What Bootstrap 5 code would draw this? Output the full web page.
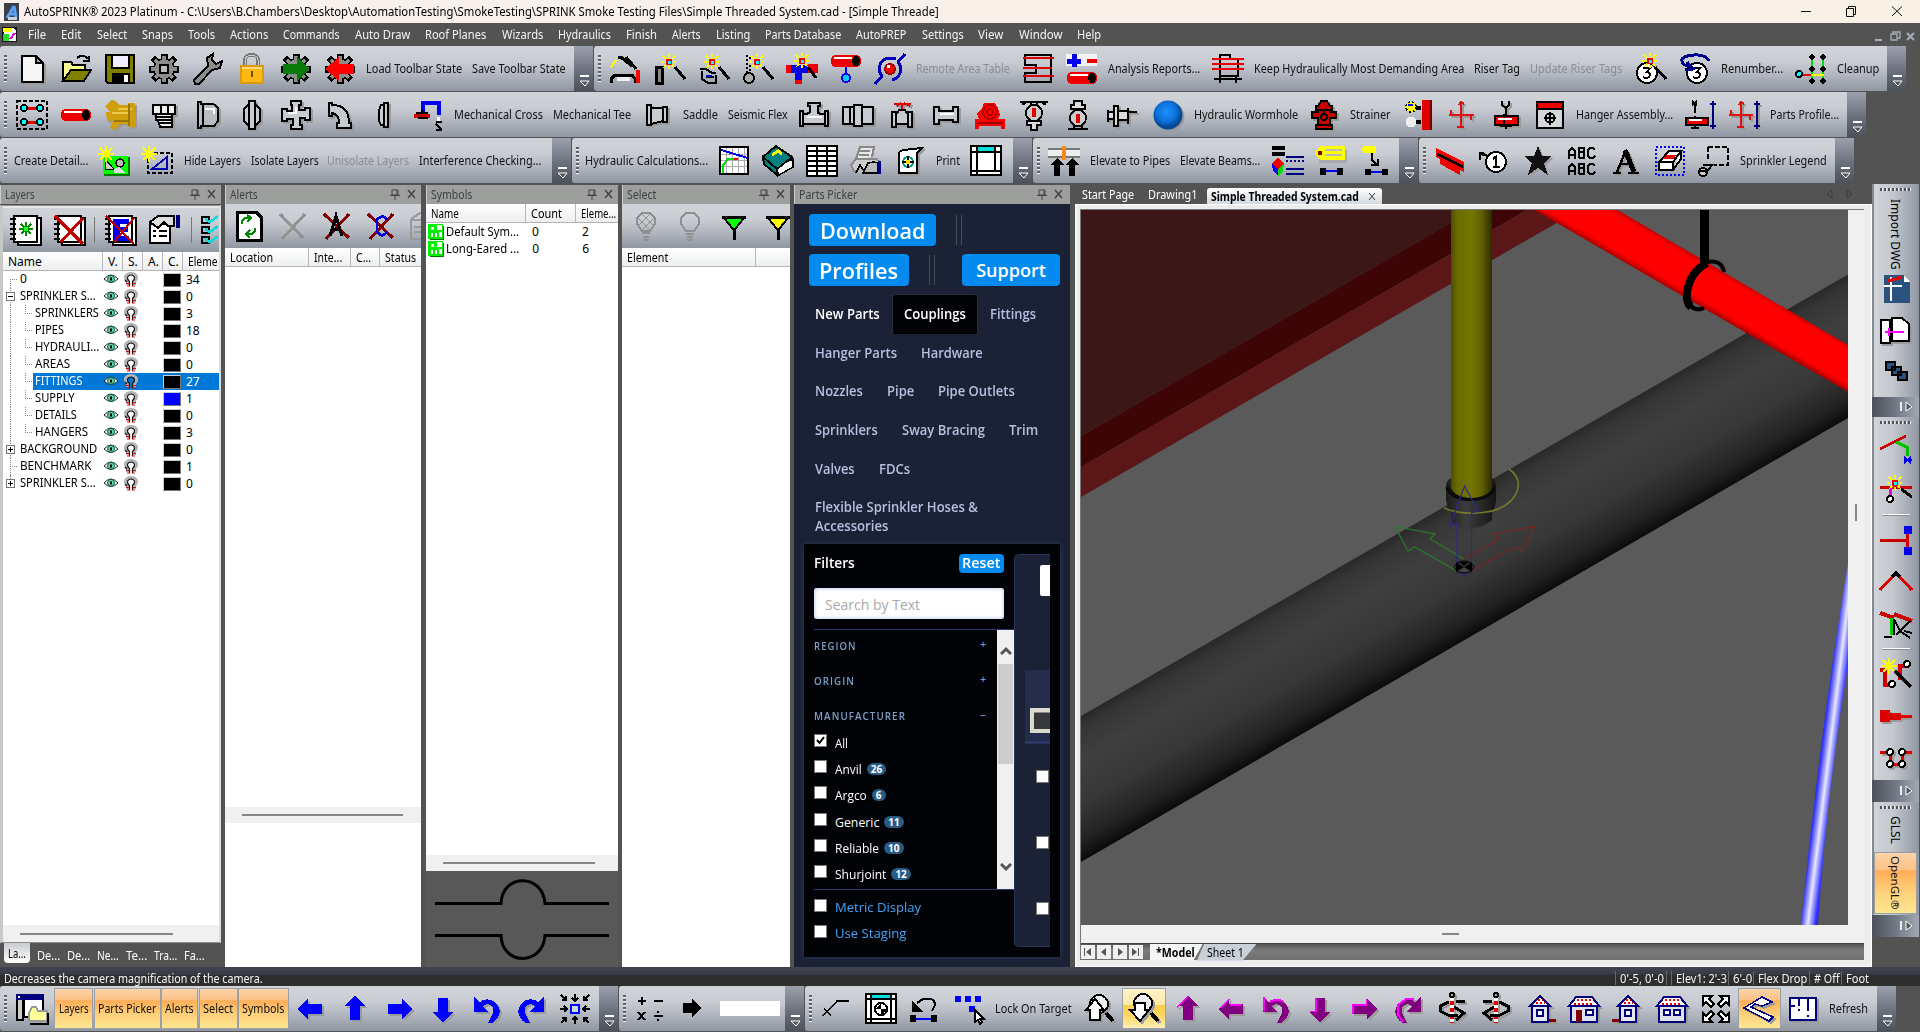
<!DOCTYPE html>
<html lang="en">
<head>
<meta charset="utf-8">
<title>AutoSPRINK 2023 Platinum</title>
<link href="https://cdn.jsdelivr.net/npm/bootstrap@5.3.0/dist/css/bootstrap.min.css" rel="stylesheet">
<style>
html,body{width:1920px;height:1032px;overflow:hidden}
body{font:12px/15px "Noto Sans","Open Sans",sans-serif;background:#535353;color:#000;margin:0}
.t{display:inline-block;white-space:nowrap;transform-origin:0 50%}
svg{display:block;flex:none}
.titlebar{height:23px;background:linear-gradient(90deg,#f9efed,#f9f1e6);padding:0 14px 0 4px}
.menubar{height:23px;color:#f4f4f4;padding-left:2px;gap:15px}
.bars{height:46px;gap:1px}
.tb{height:45px;flex:none;color:#111;background:linear-gradient(#d0d3d8 0,#c9ccd2 35%,#b0b5be 65%,#9097a2 100%);border-radius:3px 0 0 3px;overflow:hidden}
.tb .t{margin-left:4px}
.grip{width:3px;height:28px;margin:0 3px 0 4px;background:repeating-linear-gradient(#5b6068 0 2px,#eef0f3 2px 3px,transparent 3px 4px);flex:none}
.ib{width:44px;height:40px;display:flex;align-items:center;justify-content:center;flex:none}
.ic{width:32px;height:32px;fill:none;stroke:#000;stroke-width:2;overflow:visible;shape-rendering:crispEdges}
.sh{filter:drop-shadow(2px 2px 0 #9b9b9b)}
.n{stroke:none}
.gp{width:6px;flex:none}
.g4{width:4px;flex:none}
.more{width:19px;height:45px;margin-left:auto;flex:none;background:linear-gradient(#9ba1ac,#6a717d 55%,#4c515a);display:flex;align-items:flex-end;justify-content:center;padding-bottom:3px}
.off{color:#8b8e93}
.hot{height:41px;background:linear-gradient(#fbd3ab 0,#fcc183 28%,#ffae57 30%,#fed07b 65%,#ffe78f 100%);border:1px solid #9aa0aa;display:flex;align-items:center;justify-content:center;flex:none;color:#111}
.hot .t{margin-left:0}
.hoty{background:linear-gradient(#fdf3c8 0,#fde9a8 40%,#ffcf4b 42%,#ffd768 70%,#fdf0b8 100%)}
.middle{height:783px}
.pane{flex:none;height:782px;margin-top:1px}
.phead{height:19px;background:#9d9f9c;color:#3e4146;padding:0 4px 0 4px;border-left:1px solid #c9ccd0;flex:none}
.ptool{flex:none;height:44px;background:linear-gradient(#d0d3d8 0,#c9ccd2 35%,#b0b5be 65%,#9097a2 100%);overflow:hidden}
.colhead{height:19px;flex:none;background:linear-gradient(#fff,#eceef0);border-bottom:1px solid #b4b4b4;overflow:hidden}
.colhead>div{border-right:1px solid #b9b9b9;padding-left:5px;height:19px;display:flex;align-items:center;overflow:hidden;flex:none}
.colhead>div:last-child{border-right:0}
.strip{height:16px;flex:none;background:#f0f0f0;display:flex;align-items:center}
.strip i{display:block;height:2px;background:#868686}
.lrow{height:17px;display:grid;grid-template-columns:99px 20px 20px 20px 20px 1fr;align-items:center;position:relative}
.lrow .nm{position:relative;height:17px;padding-left:17px;white-space:nowrap}
.lrow .nm.kid{padding-left:32px}
.lrow .nm::before{content:"";position:absolute;left:7px;top:0;height:17px;width:7px;border-left:1px dotted #888}
.lrow .nm.tip::after{content:"";position:absolute;left:7px;top:8px;width:7px;border-top:1px dotted #888}
.lrow .nm.top0::before{top:8px;height:9px}
.lrow .nm.end0::before{height:8px}
.lrow .nm.kid::after{content:"";position:absolute;left:22px;top:0;width:7px;height:9px;border-left:1px dotted #888;border-bottom:1px dotted #888}
.lrow .nm.more0::after{height:17px;border-bottom:0}
.box9{position:absolute;left:3px;top:4px;width:9px;height:9px;border:1px solid #777;background:#fff;z-index:1}
.box9::before{content:"";position:absolute;left:1px;top:3px;width:5px;height:1px;background:#000}
.box9.pl::after{content:"";position:absolute;left:3px;top:1px;width:1px;height:5px;background:#000}
.sw{width:18px;height:14px;background:#000;border:1px solid #777;border-top-color:#ccc;border-left-color:#ccc;margin-left:1px}
.seld{color:#fff}
.seld::before{content:"";position:absolute;left:30px;right:0;top:0;height:17px;background:#0078d7}
.seld>*{position:relative}
.ltabs{height:24px;color:#fff;gap:7px;padding-left:4px}
.ltabs .acttab{background:linear-gradient(#c9ccd0,#fff);color:#000;width:26px;height:20px;border-radius:0 0 4px 4px;display:flex;align-items:center;padding-left:4px;margin-top:-4px}
.picker{background:#1b2236;font-family:"Open Sans",sans-serif;height:763px;color:#b4c0de;overflow:hidden}
.pk{background:#058bf0;color:#fff;border:0;border-radius:4px;height:32px;line-height:1;padding:0;font-weight:600;display:flex;align-items:center;justify-content:center}
.vv{width:6px;height:30px;border-left:1px solid #414b5b;border-right:1px solid #414b5b}
.pnav{font-weight:600;font-size:13.5px;line-height:19px}
.pnav .prow{height:38.7px;display:flex;align-items:center;padding-left:9px}
.pnav .lk{padding:0 12px;display:flex;align-items:center;height:40px}
.lk.cur{background:#020306;color:#fff;border:1px solid #262d3c;border-bottom:0;border-radius:4px 4px 0 0;padding:0 11px!important}
.filt{background:#020306;width:256px;height:413px;margin-left:10px;box-shadow:0 0 5px #2c3a57}
.ck{width:13px;height:13px;background:#fff;border:1px solid #777;flex:none}
.sec{font-size:10px;letter-spacing:1.1px;color:#7f9fc6;font-weight:600;height:35px;display:flex;justify-content:space-between;padding-right:10px}
.pill{background:#285b85;color:#fff;border-radius:7px;font-size:10px;font-weight:700;line-height:12px;height:12px;padding:0 4px;margin-left:5px;margin-top:3px}
.crow{height:26.2px;display:flex;align-items:flex-start;font-size:12.3px;color:#fff}
.crow .t{margin-left:8px;margin-top:2px}
.view{width:797px;flex:none;margin-left:5px;height:783px}
.vtabs{height:20px;color:#fff;padding-left:7px}
.vtabs .on{background:linear-gradient(#fff,#d3d9e0);color:#000;height:16px;margin-top:4px;border-radius:3px 3px 0 0;padding:0 5px 0 4px;font-weight:700;display:flex;align-items:center}
.frame{height:763px;background:#ececec;border:1px solid #fff;border-left:2px solid #f4f4f4;padding:4px 7px 8px 3px}
.nb{width:14px;height:14px;background:#f0f0f0;display:flex;align-items:center;justify-content:center}
.side{width:47px;margin-left:0;height:753px}
.vb{background:linear-gradient(90deg,#d0d3d8,#c5c9cf 40%,#9097a2);display:flex;flex-direction:column;align-items:center;overflow:hidden;border-left:2px solid #82898f;padding-right:2px;flex:none}
.vgrip{width:32px;height:3px;margin:4px 0 0;background:repeating-linear-gradient(90deg,#4d5158 0 2px,#eef0f3 2px 3px,transparent 3px 4px);flex:none}
.vmore{flex:none;width:47px;background:linear-gradient(90deg,#4c515a,#717885 50%,#a3a9b3);display:flex;align-items:center;justify-content:flex-end;padding-right:4px}
.vt{writing-mode:vertical-rl;text-orientation:sideways;white-space:nowrap}
.vi{height:42px;display:flex;align-items:center;justify-content:center;flex:none}
.vsep{width:28px;height:2px;border-top:1px solid #fff;background:#8a8f98;flex:none}
.statusbar{height:19px;background:linear-gradient(#3f4450 0,#343943 42%,#2d2d2d 43%,#2f2f2e 100%);color:#f4f4f4;padding-left:4px}
.sc{border-left:1px solid #6a6a6a;height:14px;padding-left:4px;display:flex;align-items:center;flex:none}
</style>
<script src="https://cdn.jsdelivr.net/npm/bootstrap@5.3.0/dist/js/bootstrap.bundle.min.js"></script>
</head>
<body class="d-flex flex-column">
<svg width="0" height="0" style="position:absolute">
<defs>
<g id="spk" stroke-width="2"><path stroke="#ff0" d="M0-8V8M-8 0H8M-6-6L6 6M6-6L-6 6" stroke-dasharray="3 1"/><rect x="-3" y="-3" width="6" height="6" fill="#e00" stroke="none"/><rect x="-1" y="-1" width="3" height="3" fill="#0ff" stroke="none"/></g>
<g id="star"><path stroke="#ff0" d="M0-8V8M-8 0H8M-6-6L6 6M6-6L-6 6"/></g>
<g id="arr"><path stroke="none" d="M0 16L13 3V10H29V22H13V29Z"/></g>
<g id="undo"><path d="M3 4V19H17L12 13C17 9 24 12 22 20L17 30H21C29 26 31 17 26 11C21 5 13 5 9 9Z" stroke="none"/></g>
<g id="gear"><path d="M16 1V31M1 16H31M5 5L27 27M27 5L5 27" stroke="#000" stroke-width="7"/><circle cx="16" cy="16" r="11" fill="#000" stroke="none"/><path d="M16 3V29M3 16H29M7 7L25 25M25 7L7 25" stroke="#8c8c8c" stroke-width="4"/><circle cx="16" cy="16" r="9.5" fill="#8c8c8c" stroke="none"/></g>
<g id="cyl"><rect x="1" y="11" width="30" height="12" rx="5" fill="#e00" stroke="none"/><path d="M4 14H22" stroke="#fff"/><ellipse cx="26" cy="17" rx="4" ry="5" fill="#000" stroke="none"/></g>
<g id="mo"><path d="M4 2H13" stroke="#fff" stroke-width="2"/><path d="M4 7H13L9 12Z" fill="#555" stroke="#fff" stroke-width="1"/></g>
<g id="pin"><path d="M2 1H8V6H2ZM0 6.5H10M5 7V11M7 1V6" stroke="#444"/></g>
<g id="xx"><path d="M1 1L8 9M8 1L1 9" stroke="#444" stroke-width="1.5"/></g>
<g id="eye"><path d="M1 6Q8-2 15 6Q8 13 1 6Z" fill="#fff" stroke="#222"/><circle cx="8" cy="5.8" r="3.5" fill="#5fd0a8" stroke="#086040"/><rect x="7" y="4.5" width="2" height="3" fill="#000" stroke="none"/></g>
<g id="mag"><path d="M3.500 13V9.500Q1 7.500 1.500 4.500Q3 1.500 7 1.500T12.500 4.500Q13 7.500 10.500 9.500V13" stroke="#b4b4b4" stroke-width="3"/><path d="M5.500 14V9.500Q3 7.500 3.500 5Q5 3 7 3T10.500 5Q11 7.500 8.500 9.500V14M1 8L3 10" stroke="#111" stroke-width="1.200"/><path d="M2 11.500H5M3 14H6M9 11.500H12M8 14H11" stroke="#e00"/></g>
<g id="house"><path d="M3 13H29V29H3Z" fill="#dfe2ea" stroke="#00007e"/><path d="M1 13L8 4H24L31 13Z" fill="#fff" stroke="#00007e"/><path d="M6 11H26M9 7H24" stroke="#e00" stroke-dasharray="2 2"/></g>
<g id="house2"><path d="M8 13H24V29H8Z" fill="#e6e8ee" stroke="#00007e"/><path d="M6 13L16 3L26 13Z" fill="#fff" stroke="#00007e"/><path d="M12 10H21M14 7H19" stroke="#e00" stroke-dasharray="2 2"/><path d="M13 17H19V23H13Z" fill="#fff" stroke="#00007e"/></g>
<linearGradient id="gy"><stop offset="0" stop-color="#4d4d00"/><stop offset=".15" stop-color="#6a6a00"/><stop offset=".5" stop-color="#757500"/><stop offset=".75" stop-color="#606000"/><stop offset="1" stop-color="#2c2c00"/></linearGradient>
<linearGradient id="gg" gradientUnits="userSpaceOnUse" x1="1509" y1="469" x2="1573" y2="580"><stop offset="0" stop-color="#282828"/><stop offset=".09" stop-color="#353535"/><stop offset=".3" stop-color="#3f3f3f"/><stop offset=".6" stop-color="#373737"/><stop offset=".85" stop-color="#222"/><stop offset="1" stop-color="#080808"/></linearGradient>
<linearGradient id="gr" gradientUnits="userSpaceOnUse" x1="1700" y1="258" x2="1678" y2="296"><stop offset="0" stop-color="#c80000"/><stop offset=".12" stop-color="#f00"/><stop offset=".8" stop-color="#f00"/><stop offset="1" stop-color="#8a0000"/></linearGradient>
<linearGradient id="gb" gradientUnits="userSpaceOnUse" x1="1812" y1="793" x2="1836" y2="796"><stop offset="0" stop-color="#1a1aa0"/><stop offset=".2" stop-color="#3838ff"/><stop offset=".5" stop-color="#e8e8ff"/><stop offset=".8" stop-color="#3838ff"/><stop offset="1" stop-color="#1a1aa0"/></linearGradient>
<linearGradient id="gc"><stop offset="0" stop-color="#1c1c1c"/><stop offset=".4" stop-color="#3d3d3d"/><stop offset="1" stop-color="#141414"/></linearGradient>
<radialGradient id="ball" cx=".45" cy=".4"><stop offset="0" stop-color="#1e90ff"/><stop offset=".7" stop-color="#0a6fd6"/><stop offset="1" stop-color="#064a96"/></radialGradient>
</defs></svg>

<header class="titlebar d-flex align-items-center">
<svg width="16" height="18" viewBox="0 0 16 18"><rect width="15" height="18" fill="#3c3f4a"/><path d="M10 3L3 15M10 3L12 14M5 11H12" stroke="#58a0f0" stroke-width="3" fill="none"/><path d="M4 14H13V17H4Z" fill="#c9d2e4"/></svg>
<span class="t ms-1" data-w="915">AutoSPRINK® 2023 Platinum - C:\Users\B.Chambers\Desktop\AutomationTesting\SmokeTesting\SPRINK Smoke Testing Files\Simple Threaded System.cad - [Simple Threade]</span>
<svg class="ms-auto" width="106" height="22" fill="none" stroke="#111"><path d="M1 10.500H11"/><path d="M46.500 7.500H53.500V15.500H46.500ZM48.500 7V5.500H55.500V13.500H54"/><path d="M92 5.500L102 15M102 5.500L92 15"/></svg>
</header>

<nav class="menubar d-flex align-items-center">
<svg width="16" height="16" viewBox="0 0 16 16" class="ic" style="width:16px;height:16px;margin-right:-5px"><rect class="n" width="15" height="15" fill="#111"/><path class="n" fill="#fff" d="M2 1H11L14 4V14H2Z"/><path class="n" fill="#ff0" d="M1 1H10V5H1Z"/><path class="n" fill="#2d2" d="M1 7H7V14H1Z"/><path d="M8 12L13 6" stroke="#d0d"/></svg>
<span class="t" data-w="18">File</span><span class="t" data-w="20">Edit</span><span class="t" data-w="30">Select</span><span class="t" data-w="31">Snaps</span><span class="t" data-w="27">Tools</span><span class="t" data-w="38">Actions</span><span class="t" data-w="57">Commands</span><span class="t" data-w="55">Auto Draw</span><span class="t" data-w="61">Roof Planes</span><span class="t" data-w="41">Wizards</span><span class="t" data-w="53">Hydraulics</span><span class="t" data-w="31">Finish</span><span class="t" data-w="29">Alerts</span><span class="t" data-w="34">Listing</span><span class="t" data-w="76">Parts Database</span><span class="t" data-w="50">AutoPREP</span><span class="t" data-w="42">Settings</span><span class="t" data-w="25">View</span><span class="t" data-w="44">Window</span><span class="t" data-w="24">Help</span>
<svg class="ms-auto me-1" width="42" height="20" fill="none" stroke="#a5adba" stroke-width="2"><path d="M1 15H8"/><path d="M17 9H23V15H17ZM19 9V7H26V13H23" stroke-width="1.300"/><path d="M33 8L40 15M40 8L33 15"/></svg>
</nav>

<!-- main toolbars, first row -->
<div class="bars d-flex">
<div class="tb d-flex align-items-center" style="width:593px"><i class="grip"></i>
<div class="ib"><svg class="ic sh"><path fill="#f6f6f6" d="M6 3H20L27 10V29H6ZM20 3V10H27"/></svg></div>
<div class="ib"><svg class="ic"><path fill="#ffff90" d="M3 28V9H11L13 12H25V16"/><path fill="#808000" d="M3 28L11 17H31L24 28Z"/><path d="M17 5Q23 0 28 6M29 3V8H23"/></svg></div>
<div class="ib"><svg class="ic"><path fill="#808000" d="M2 2H30V30H4L2 28Z"/><path fill="#eef" d="M8 2H25V15H8Z"/><path class="n" fill="#000" d="M8 20H26V30H8Z"/><path class="n" fill="#fff" d="M20 22H24V29H20Z"/></svg></div>
<div class="ib"><svg class="ic"><use href="#gear"/><path fill="#bbb" d="M12 12H20V20H12Z"/></svg></div>
<div class="ib"><svg class="ic"><path fill="#8c8c8c" d="M2 27L16 13L15 5L21 1L20 7L24 11L30 8L28 15L20 17L7 31H3Z"/></svg></div>
<div class="ib"><svg class="ic"><path d="M9 14V7C9 0 22 0 22 7V14" stroke="#777" stroke-width="4"/><path d="M9 14V7C9 1 22 1 22 7V14" stroke="#ccc" stroke-width="1"/><rect x="5" y="13" width="22" height="17" fill="#fdb813" stroke="#d99a10"/><path stroke="#6b4a00" d="M16 18V24"/><path stroke="#ffd97a" d="M6 15H26"/></svg></div>
<div class="ib"><svg class="ic"><use href="#gear"/><path class="n" fill="#087a08" d="M3 11H17V4L30 16L17 28V21H3Z"/></svg></div>
<div class="ib"><svg class="ic"><use href="#gear"/><path class="n" fill="#f00" d="M30 11H15V4L1 16L15 28V21H30Z"/></svg></div>
<span class="t" data-w="96">Load Toolbar State</span><i class="gp"></i><span class="t" data-w="94">Save Toolbar State</span>
<div class="more"><svg width="16" height="14"><use href="#mo"/></svg></div></div>

<div class="tb d-flex align-items-center" style="width:1312px"><i class="grip"></i>
<div class="ib"><svg class="ic"><path stroke="#ff0" d="M1 14L6 7"/><path stroke-width="3" d="M8 4H13M12 5L22 13M16 4L26 16M1 30V26L5 22H22L25 26V30"/><path class="n" fill="#eee" d="M7 24H20V28H7Z"/><path fill="#f00" class="n" d="M26 17H30V30H26Z"/></svg></div>
<div class="ib"><svg class="ic"><path fill="#888" stroke-width="3" d="M2 14H8V30H2Z"/><use href="#spk" x="15" y="9"/><path stroke-width="3" d="M21 14L31 26"/></svg></div>
<div class="ib"><svg class="ic"><path d="M2 16H8L14 20H18M4 18V26L10 30H18V22M8 24H16"/><path stroke="#00c" d="M8 23H14"/><use href="#spk" x="14" y="9"/><path stroke-width="3" d="M21 14L31 26"/></svg></div>
<div class="ib"><svg class="ic"><path d="M5 2V20M8 4V20" stroke-dasharray="2 2"/><circle cx="7" cy="25" r="5" fill="#aaa"/><use href="#spk" x="15" y="9"/><path stroke-width="3" d="M21 14L31 26"/></svg></div>
<div class="ib"><svg class="ic"><path class="n" fill="#e00" d="M0 12H6V20H0ZM22 11H32V20H22ZM9 27H16V31H9Z"/><path class="n" fill="#00e" d="M5 12H22V20H16V27H9V20H5Z"/><use href="#spk" x="16" y="8"/><path stroke-width="3" d="M22 14L30 25"/></svg></div>
<div class="ib"><svg class="ic"><use href="#cyl" y="-9"/><path stroke="#00e" d="M16 14V20"/><circle cx="16" cy="25" r="4" fill="#0cf" stroke="#00e"/></svg></div>
<div class="ib"><svg class="ic"><path stroke="#0000b8" stroke-width="3" d="M1 31L8 23M24 9L31 1M24 9A11 11 0 0 1 18 27M8 23A11 11 0 0 1 14 5H22"/><circle cx="16" cy="16" r="5" fill="#f00" stroke="#900"/><rect class="n" x="13" y="12" width="3" height="3" fill="#fff"/></svg></div>
<span class="t off" data-w="94">Remote Area Table</span><i class="gp"></i>
<div class="ib"><svg class="ic"><path d="M3 2H29V29H3V20H14V12H3Z"/><path stroke="#d00" d="M1 5H32M1 15H30M1 23H32" stroke-width="2"/></svg></div>
<div class="ib"><svg class="ic"><path class="n" fill="#fff" d="M0 1H31V13H0Z" opacity=".75"/><path stroke="#00e" stroke-width="5" d="M8 1V14M1 8H15"/><path stroke="#e00" stroke-width="4" d="M21 8H31"/><use href="#cyl" y="8"/></svg></div>
<span class="t" data-w="92">Analysis Reports...</span><i class="gp"></i>
<div class="ib"><svg class="ic"><path d="M8 2H18V6H26V23H8ZM2 26H30M8 22V30M24 22V30"/><path stroke="#e00" d="M0 6H32M0 11H32M0 16H32"/></svg></div>
<span class="t" data-w="210">Keep Hydraulically Most Demanding Area</span><i class="gp"></i><span class="t" data-w="46">Riser Tag</span><i class="gp"></i><span class="t off" data-w="92">Update Riser Tags</span><i class="gp"></i>
<div class="ib"><svg class="ic"><circle cx="12" cy="20" r="10" fill="#fff"/><path d="M8 15H15L12 19Q17 20 14 24Q11 26 8 24"/><use href="#spk" x="15" y="8"/><path stroke-width="3" d="M20 14L31 26"/></svg></div>
<div class="ib"><svg class="ic"><circle cx="18" cy="20" r="10" fill="#fff"/><path d="M14 15H21L18 19Q23 20 20 24Q17 26 14 24"/><path stroke="#00008b" stroke-width="3" d="M30 8Q26 1 15 2Q2 3 3 8Q3 13 12 13M8 9L14 16L6 17"/></svg></div>
<span class="t" data-w="62">Renumber...</span><i class="gp"></i>
<div class="ib"><svg class="ic"><path stroke="#0d0" d="M17 4V28M28 4V28"/><path stroke="#ff0" d="M16 22H29"/><path stroke="#e00" d="M5 22H16"/><path fill="#fff" stroke-width="1.500" d="M15 4L17 2L19 4L17 6ZM26 4L28 2L30 4L28 6ZM15 16L17 14L19 16L17 18ZM26 16L28 14L30 16L28 18ZM15 28L17 26L19 28L17 30ZM26 28L28 26L30 28L28 30Z"/><circle cx="4" cy="21" r="3" fill="#0ff"/></svg></div>
<span class="t" data-w="42">Cleanup</span>
<div class="more"><svg width="16" height="14"><use href="#mo"/></svg></div></div>
</div>

<!-- parts toolbar -->
<div class="bars d-flex">
<div class="tb d-flex align-items-center" style="width:1866px"><i class="grip"></i>
<div class="ib"><svg class="ic"><rect x="1" y="2" width="30" height="28" stroke-dasharray="4 2"/><path stroke="#d00" stroke-width="3" d="M9 9H23M9 23H23"/><g fill="#0ff" stroke-width="1.500"><circle cx="8" cy="9" r="3"/><circle cx="24" cy="9" r="3"/><circle cx="8" cy="23" r="3"/><circle cx="24" cy="23" r="3"/></g></svg></div>
<div class="ib"><svg class="ic"><use href="#cyl" y="-1"/></svg></div>
<div class="ib"><svg class="ic sh"><path class="n" fill="#cf9f10" d="M1 8L7 1L12 2L15 6H24V4H31V28H24V25H16L11 31L6 29L9 22H3L2 13H7Z"/><path stroke="#ecc94a" d="M14 10H28M8 14H24"/><path stroke="#9a7406" d="M25 5V27M10 22H24"/></svg></div>
<div class="ib"><svg class="ic sh"><path fill="#eee" d="M5 6H27V15H5ZM8 15H24V21H8ZM10 21H24V28H12ZM13 6V15M20 6V15M9 18H24M11 24H24"/></svg></div>
<div class="ib"><svg class="ic sh"><path fill="#b8bcc3" d="M6 3H9V5H20Q26 6 26 11V22L22 27H9V29H6Z"/><path stroke="#fff" d="M13 10H22V15"/><path d="M11 5V28"/></svg></div>
<div class="ib"><svg class="ic sh"><path fill="#c8ccd2" d="M13 2H19V30H13ZM13 5L8 10V22L13 27M19 5L24 10V22L19 27"/></svg></div>
<div class="ib"><svg class="ic sh"><path fill="#c8ccd2" d="M11 2H21V6H19V11H25V9H30V21H25V19H20V26H22V30H11V26H13V20H7V22H2V10H7V12H12V6H11Z"/><path stroke="#fff" d="M8 14H16V8"/></svg></div>
<div class="ib"><svg class="ic sh"><path fill="#c8ccd2" d="M5 4H8V6Q25 6 25 24H27V29H13V24H15Q15 15 8 14V17H5Z"/></svg></div>
<div class="ib"><svg class="ic sh"><path fill="#c8ccd2" d="M16 4H20V28H16ZM16 6H13L11 11V22L13 26H16"/></svg></div>
<div class="ib"><svg class="ic"><path stroke="#00e" stroke-width="4" d="M11 14V4H27V16"/><path stroke="#c00" stroke-width="4" d="M2 17H18"/><path d="M4 14H16M6 19H16M10 11V15"/><path stroke="#fff" stroke-width="3" d="M26 18V24"/><path d="M24 23H30M24 25L27 28L30 31M24 31H30"/></svg></div>
<span class="t" data-w="89">Mechanical Cross</span><i class="gp"></i><span class="t" data-w="78">Mechanical Tee</span><i class="g4"></i>
<div class="ib"><svg class="ic sh"><path fill="#c8ccd2" d="M6 6H10V9H22V8H26V23H22V22L10 25V26H6ZM10 6V26M22 9V24"/></svg></div>
<span class="t" data-w="35">Saddle</span><i class="gp"></i><span class="t" data-w="60">Seismic Flex</span><i class="g4"></i>
<div class="ib"><svg class="ic sh"><path fill="#c8ccd2" d="M10 4H22V7H20V14L23 15H27V12H30V27H27V25H5V27H2V12H5V15H9L12 13V7H10ZM5 14V25M27 14V25"/><path stroke="#fff" d="M9 18H24"/></svg></div>
<div class="ib"><svg class="ic sh"><path fill="#c8ccd2" d="M1 8H12V25H1ZM20 8H31V25H20ZM12 6H20V27H12ZM8 8V25"/></svg></div>
<div class="ib"><svg class="ic sh"><path stroke="#d00" d="M8 5H25M11 7L15 4M18 4L24 7M16 4V11"/><path fill="#c8ccd2" d="M6 13H10V16L13 11H19L22 16V13H26V28H22V25H10V28H6ZM10 16V25M22 16V25"/></svg></div>
<div class="ib"><svg class="ic sh"><path fill="#c8ccd2" d="M4 8H9V12H23V8H28V23H23V21H9V25H4Z"/><path stroke="#fff" d="M10 15H24"/></svg></div>
<div class="ib"><svg class="ic"><path class="n" fill="#f00" d="M3 14L8 10L10 4H21L24 9L26 16L24 20H31V30H27V27H5V30H1V20H5Z"/><circle cx="16" cy="13" r="7" stroke="#b00"/><circle cx="16" cy="13" r="3" stroke="#b00"/><path stroke="#900" d="M3 24H29"/></svg></div>
<div class="ib"><svg class="ic"><path d="M2 3H30M4 5Q6 6 8 3M28 5Q26 6 24 3" stroke-width="2"/><circle cx="16" cy="14" r="8" fill="#ccc"/><path stroke="#d00" stroke-width="4" d="M16 9V18"/><path fill="#ddd" d="M9 22H23V26H19V31H13V26H9ZM13 3V7M19 3V7"/></svg></div>
<div class="ib"><svg class="ic"><circle cx="16" cy="19" r="8" fill="#ccc"/><path stroke="#d00" stroke-width="4" d="M16 15V24"/><path fill="#ddd" d="M12 2H20V6H23V10H9V6H12ZM6 30H26M12 26V30M20 26V30"/></svg></div>
<div class="ib"><svg class="ic sh"><path fill="#ddd" d="M2 11V23M2 13H8V20H2M8 7H12V27H8ZM12 12H22V21H12M22 9V25M22 13H31" /></svg></div>
<div class="ib" style="margin-left:2px"><svg class="ic sh"><circle class="n" cx="16" cy="16" r="14.500" fill="url(#ball)" shape-rendering="auto"/></svg></div>
<span class="t" data-w="104">Hydraulic Wormhole</span><i class="g4"></i>
<div class="ib"><svg class="ic sh"><path fill="#c80000" d="M10 7L13 2H19L22 7H24V11H22V13H28V19H22V26H24V30H8V26H10V19H4V13H10V11H8V7Z"/><path d="M8 11H24M16 11V16M8 26H24"/><circle cx="16" cy="18" r="3"/></svg></div>
<span class="t" data-w="41">Strainer</span><i class="gp"></i>
<div class="ib"><svg class="ic"><path class="n" fill="#d00" d="M20 1H28V31H20Z"/><path class="n" fill="#700" d="M28 1H30V31H28Z"/><circle cx="9" cy="8" r="5" fill="#ff0" stroke-dasharray="2 2"/><path stroke="#00e" d="M6 6H11"/><circle class="n" cx="9" cy="23" r="5.500" fill="#eee"/><path stroke-width="4" d="M14 9H19M14 23H19"/></svg></div>
<div class="ib"><svg class="ic sh"><path stroke="#e01010" d="M15 3V28M3 16H28M13 6L15 3L18 5M5 11V16M25 16V21M11 28L18 28" stroke-width="2"/></svg></div>
<div class="ib"><svg class="ic sh"><path d="M12 2V6L16 9L19 6V2M16 9V30M10 27H22"/><path class="n" fill="#e00" d="M5 16H29V25H5Z"/><path d="M5 17H28V26H5ZM14 15V28"/><path stroke="#fff" d="M8 20H22"/></svg></div>
<div class="ib"><svg class="ic"><path fill="#d4d6da" d="M3 3H29V29H3Z" stroke-width="2.500"/><path class="n" fill="#e00" d="M4 4H28V9H4Z"/><path d="M3 10H29M16 13V26M10 19H22"/><circle cx="16" cy="19" r="4.500"/></svg></div>
<span class="t" data-w="97">Hanger Assembly...</span><i class="g4"></i>
<div class="ib"><svg class="ic"><path d="M8 2L13 6M13 2L8 6M11 5V14M11 17V30M7 29H15"/><path class="n" fill="#e00" d="M2 18H25V26H2Z"/><path d="M2 19H24V26H2Z"/><path stroke="#fff" d="M5 21H18"/><path stroke="#00007e" d="M29 2V30M26 5H32M26 27H32"/></svg></div>
<div class="ib"><svg class="ic sh"><path stroke="#e01010" stroke-width="2" d="M13 3V28M1 16H25M11 6L13 3L16 5M3 11V16M22 16V21M9 28H16"/><path stroke="#00007e" d="M29 2V30M26 5H32M26 27H32"/></svg></div>
<span class="t" data-w="69">Parts Profile...</span>
<div class="more"><svg width="16" height="14"><use href="#mo"/></svg></div></div>
</div>

<!-- detail, calculation, elevation and annotation toolbars -->
<div class="bars d-flex">
<div class="tb d-flex align-items-center" style="width:571px"><i class="grip"></i>
<span class="t" data-w="74">Create Detail...</span><i class="g4"></i>
<div class="ib"><svg class="ic"><path class="n" fill="#070" d="M6 12H32V31H6Z"/><path class="n" fill="#0f0" d="M5 11H30V29H5Z"/><path d="M7 14L16 24H7Z" fill="#ccc" stroke-width="1"/><circle cx="22" cy="18" r="4" fill="#bbb" stroke-width="1.500"/><path class="n" d="M16 24L21 22L27 28H16Z" fill="#ddd"/><use href="#star" x="8" y="9"/></svg></div>
<div class="ib"><svg class="ic"><rect x="6" y="8" width="24" height="20" stroke-dasharray="4 2"/><path stroke="#0000b0" d="M10 24L25 12V24Z"/><use href="#star" x="7" y="9"/></svg></div>
<span class="t" data-w="57">Hide Layers</span><i class="gp"></i><span class="t" data-w="68">Isolate Layers</span><i class="g4"></i><span class="t off" data-w="82">Unisolate Layers</span><i class="gp"></i><span class="t" data-w="122">Interference Checking...</span>
<div class="more"><svg width="16" height="14"><use href="#mo"/></svg></div></div>

<div class="tb d-flex align-items-center" style="width:460px"><i class="grip"></i>
<span class="t" data-w="123" style="margin-left:3px">Hydraulic Calculations...</span><i class="g4"></i>
<div class="ib"><svg class="ic"><path fill="#fff" d="M2 2H30V29H2Z"/><path stroke="#aaa" stroke-width="1" d="M8 3V28M14 3V28M20 3V28M26 3V28M3 9H29M3 15H29M3 21H29"/><path stroke="#00e" d="M3 5L30 13"/><path stroke="#0d0" d="M5 28V20L10 14H16"/><path stroke="#f00" d="M16 14H20"/></svg></div>
<div class="ib"><svg class="ic"><path fill="#fff" d="M14 22L31 14V22L17 30Z" stroke-width="1.500"/><path fill="#008080" d="M14 1L30 12L15 24L1 12Z"/><path fill="#008080" d="M1 12L15 24V30L2 19Z"/><path stroke="#ff0" stroke-width="3" d="M10 10L16 6L20 9"/></svg></div>
<div class="ib"><svg class="ic"><path fill="#fff" d="M1 1H31V31H1ZM1 6H31M1 11H31M1 16H31M1 21H31M1 26H31M11 1V31M21 1V31"/></svg></div>
<div class="ib"><svg class="ic"><path stroke="#888" fill="#e8e8e8" d="M6 14L10 2H24L22 12M10 6H20M9 10H19"/><path stroke="#888" fill="#ccc" d="M1 20L6 14H26L30 17V26H4Z"/><path d="M6 28L10 20L14 26L18 18L24 17L28 18V28H12" fill="#bbb" stroke-width="1.500"/><path stroke="#00007e" stroke-width="3" d="M29 16V29"/></svg></div>
<div class="ib"><svg class="ic sh"><path fill="#fff" d="M5 28V10Q4 6 10 5L28 3L23 8V28Z"/><circle cx="14" cy="17" r="5" stroke="#00a080"/><path d="M14 11V23M8 17H20"/><rect class="n" x="12" y="15" width="4" height="4" fill="#fd0"/></svg></div>
<span class="t" data-w="24">Print</span><i class="g4"></i>
<div class="ib"><svg class="ic"><path fill="#fff" d="M1 1H31V30H1ZM7 1V30M25 1V26M1 7H31M1 26H31"/><path class="n" fill="#0dd" d="M8 2H24V6H8Z"/></svg></div>
<div class="more"><svg width="16" height="14"><use href="#mo"/></svg></div></div>

<div class="tb d-flex align-items-center" style="width:385px"><i class="grip" style="margin-right:2px"></i>
<div class="ib"><svg class="ic"><path class="n" fill="#eee" d="M0 4H32V12H0Z"/><path stroke="#777" d="M0 4H32M0 12H32"/><path stroke="#f68a1e" stroke-width="4" d="M16 1V15"/><path class="n" fill="#000" d="M2 20L9 13L16 20H12V31H6V20ZM17 20L24 13L31 20H27V31H21V20Z"/></svg></div>
<span class="t" data-w="80">Elevate to Pipes</span><i class="gp"></i><span class="t" data-w="80">Elevate Beams...</span><i class="g4"></i>
<div class="ib"><svg class="ic"><path stroke-width="4" d="M1 3H14M1 9H14"/><path class="n" fill="#e00" d="M1 19L7 12L13 19L7 24Z"/><path class="n" fill="#00f" d="M1 19L7 24V31L2 26Z"/><path class="n" fill="#0d0" d="M13 19L7 24V31L12 26Z"/><path stroke="#00007e" d="M15 12H33M15 24H33M15 29H33"/><path stroke="#00007e" stroke-dasharray="2 2" d="M15 16H33"/></svg></div>
<div class="ib"><svg class="ic"><path class="n" fill="#aaa" d="M4 5H32V18H4Z"/><path class="n" fill="#ff0" d="M1 5L5 1H30V15H5L1 11Z"/><path stroke="#bbb" d="M10 5H27M10 10H27"/><circle cx="5" cy="8" r="1.500" stroke="#800"/><path stroke="#00e" d="M9 26H25"/><path class="n" fill="#000" d="M5 23H11V30H5ZM22 23H28V30H22Z"/></svg></div>
<div class="ib"><svg class="ic"><path class="n" fill="#ff0" d="M2 4L5 1H17V8H5Z"/><path d="M13 8V15L18 20M12 20H19V14"/><path stroke="#00e" d="M9 27H25"/><path class="n" fill="#000" d="M6 24H12V30H6ZM23 24H29V30H23Z"/></svg></div>
<div class="more"><svg width="16" height="14"><use href="#mo"/></svg></div></div>

<div class="tb d-flex align-items-center" style="width:435px"><i class="grip" style="margin-right:2px"></i>
<div class="ib"><svg class="ic"><path class="n" fill="#e00" d="M2 3L30 17V27L2 12Z"/><path d="M3 9L29 22" stroke-width="3"/><path class="n" fill="#e00" d="M6 14L26 24L26 30L6 19Z"/></svg></div>
<div class="ib"><svg class="ic"><circle cx="18" cy="17" r="10" fill="#fff"/><path d="M15 14L18 12V22M15 22H22M9 10L2 9M2 15V8H6" stroke-width="2.500"/></svg></div>
<div class="ib"><svg class="ic sh"><path class="n" fill="#111" d="M16 1L20 11H30L22 18L26 30L16 23L6 30L10 18L2 11H12Z"/></svg></div>
<div class="ib"><svg class="ic"><g id="abc"><path d="M3 14V6L6 3L9 6V14M3 10H9M13 13V3H18V7H13M18 8V13H13M29 5L27 3H24L22 5V11L24 13H27L29 11"/></g><use href="#abc" y="16"/></svg></div>
<div class="ib"><svg class="ic sh"><path d="M7 27L16 5M10 19H21M3 28H11M18 28H29" stroke-width="2.500"/><path d="M15 5L24 27" stroke-width="5"/></svg></div>
<div class="ib"><svg class="ic"><rect x="2" y="2" width="28" height="28" stroke="#00f" stroke-dasharray="2 2"/><path fill="#fff" d="M5 17L15 6H27L19 17ZM5 17V25H19V17M19 25L27 14V6"/><path class="n" fill="#e00" d="M12 10H22L20 14H9Z"/></svg></div>
<div class="ib"><svg class="ic"><path d="M10 2H30V20H16M10 2V14" stroke-dasharray="5 2" stroke-width="2"/><circle cx="5" cy="27" r="4" fill="#ccc"/><path d="M5 20H14L8 28M2 26H9"/></svg></div>
<span class="t" data-w="87">Sprinkler Legend</span>
<div class="more"><svg width="16" height="14"><use href="#mo"/></svg></div></div>
</div>

<!-- docked panes and drawing window -->
<main class="middle d-flex">
<section class="pane d-flex flex-column" style="width:221px">
<div class="phead d-flex align-items-center"><span class="t" data-w="30">Layers</span><svg class="ms-auto" width="27" height="12" fill="none"><use href="#pin"/><use href="#xx" x="17"/></svg></div>
<div class="bg-white d-flex flex-column" style="height:739px;border:1px solid #8a8d92;border-left:3px solid #c8c8c8;border-right:2px solid #dcdcdc;margin-top:1px">
<div class="ptool d-flex align-items-center" style="height:46px;border-top:2px solid #e8e8e8">
<div class="ib"><svg class="ic"><path fill="#fff" stroke-width="2" d="M9 4H32V31H9Z"/><path fill="#fff" d="M5 2H28V28H5Z"/><path stroke-width="2" d="M1 5H7M1 10H7M1 15H7M1 20H7M1 25H7"/><path stroke="#080" d="M17 8V22M10 15H24M12 10L22 20M22 10L12 20"/><rect class="n" x="15" y="13" width="4" height="4" fill="#2f2"/></svg></div>
<div class="ib"><svg class="ic"><path fill="#fff" d="M9 4H32V31H9Z"/><path fill="#fff" d="M5 2H28V28H5Z"/><path d="M1 5H7M1 10H7M1 15H7M1 20H7M1 25H7"/><path stroke="#c00000" stroke-width="3" d="M2 2L30 30M30 4L8 28"/></svg></div>
<i style="width:2px;height:26px;background:#f4f4f4;border-left:1px solid #777;margin:0 3px"></i>
<div class="ib"><svg class="ic"><path fill="#fff" d="M9 4H32V31H9Z"/><path fill="#fff" d="M5 2H28V28H5Z"/><path d="M1 5H7M1 10H7M1 15H7M1 20H7M1 25H7"/><path class="n" fill="#00e" d="M9 5H25V10H16V13H24V18H16V22H25V27H9Z"/><path stroke="#c00000" stroke-width="2" d="M2 2L30 30M30 4L10 28"/></svg></div>
<div class="ib"><svg class="ic"><path fill="#fff" d="M2 10H22V29H2ZM5 17H8M11 17H19M5 22H8M11 22H19"/><path fill="#ddd" d="M2 8L10 2H26V12H20L16 8L10 14Z"/><path stroke="#00007e" stroke-width="4" d="M30 1V14"/></svg></div>
<i style="width:2px;height:26px;background:#f4f4f4;border-left:1px solid #777;margin:0 4px 0 5px"></i>
<svg class="ic" style="margin-left:4px"><path d="M2 3H9V9H2ZM2 13H9V19H2ZM2 23H9V29H2Z"/><path stroke="#0dd" stroke-width="2.500" d="M5 5L10 8L18 2M5 15L10 18L18 12M5 25L10 28L18 22"/></svg>
</div>
<div class="colhead d-flex"><div style="width:100px">Name</div><div style="width:20px">V.</div><div style="width:20px">S.</div><div style="width:20px">A.</div><div style="width:20px">C.</div><div style="width:36px"><span class="t" data-w="30">Eleme</span></div></div>
<div id="layerRows"></div>
<div class="strip mt-auto" style="height:17px"><i style="width:153px;margin-left:17px"></i></div>
</div>
<div class="ltabs d-flex align-items-center"><div class="acttab"><span class="t" data-w="18">La...</span></div><span class="t" data-w="23">De...</span><span class="t" data-w="23">De...</span><span class="t" data-w="22">Ne...</span><span class="t" data-w="21">Te...</span><span class="t" data-w="23">Tra...</span><span class="t" data-w="21">Fa...</span></div>
</section>

<section class="pane d-flex flex-column bg-white" style="width:196px;margin-left:4px">
<div class="phead d-flex align-items-center"><span class="t" data-w="28">Alerts</span><svg class="ms-auto" width="27" height="12" fill="none"><use href="#pin"/><use href="#xx" x="17"/></svg></div>
<div class="ptool d-flex align-items-center" style="padding-left:2px">
<div class="ib"><svg class="ic"><path fill="#fff" stroke-width="3" d="M4 2H23L28 7V30H4Z"/><path stroke="#080" stroke-width="2.500" d="M9 14V11L12 8H17M14 5L18 8L14 12M22 18V21L19 24H14M17 20L13 24L17 28"/></svg></div>
<div class="ib"><svg class="ic"><path stroke="#929292" stroke-width="3" d="M3 4L26 28M28 4L5 29"/></svg></div>
<div class="ib"><svg class="ic"><path stroke="#800000" stroke-width="3" d="M3 4L28 28M28 4L5 29"/><path d="M9 26L15 6L21 26M11 19H19" stroke-width="3"/></svg></div>
<div class="ib"><svg class="ic"><path stroke="#800000" stroke-width="3" d="M3 4L28 28M28 4L5 29"/><path stroke="#00e" stroke-width="2.500" d="M23 10L18 6L12 9V22L17 26L23 22"/></svg></div>
<svg class="ic" style="margin-left:5px"><path stroke="#999" d="M3 10H22V29H3ZM6 17H19M6 22H19M3 9L12 3H26"/></svg>
</div>
<div class="colhead d-flex"><div style="width:84px"><span class="t" data-w="43">Location</span></div><div style="width:42px"><span class="t" data-w="28">Inte...</span></div><div style="width:29px"><span class="t" data-w="15">C...</span></div><div style="width:41px"><span class="t" data-w="31">Status</span></div></div>
<div style="height:540px"></div>
<div class="strip"><i style="width:161px;margin-left:17px"></i></div>
</section>

<section class="pane d-flex flex-column bg-white" style="width:192px;margin-left:5px">
<div class="phead d-flex align-items-center"><span class="t" data-w="41">Symbols</span><svg class="ms-auto" width="27" height="12" fill="none"><use href="#pin"/><use href="#xx" x="17"/></svg></div>
<div class="colhead d-flex"><div style="width:100px"><span class="t" data-w="28">Name</span></div><div style="width:50px"><span class="t" data-w="31">Count</span></div><div style="width:42px"><span class="t" data-w="35">Eleme...</span></div></div>
<div id="symRows"></div>
<div class="strip mt-auto"><i style="width:152px;margin-left:17px"></i></div>
<svg width="192" height="96" viewBox="426 871 192 96" fill="none" stroke="#000" stroke-width="3"><rect x="426" y="871" width="192" height="96" fill="#585858" stroke="none"/><path d="M435 903.500H501C502 873 543 873 545 903.500H609M435 935.500H501C502 966 543 966 545 935.500H609"/></svg>
</section>

<section class="pane d-flex flex-column bg-white" style="width:168px;margin-left:4px">
<div class="phead d-flex align-items-center"><span class="t" data-w="29">Select</span><svg class="ms-auto" width="27" height="12" fill="none"><use href="#pin"/><use href="#xx" x="17"/></svg></div>
<div class="ptool d-flex align-items-center" style="padding-left:2px">
<div class="ib"><svg class="ic"><g stroke="#909090"><path d="M12 21L7 14V8L12 3H20L25 8V14L20 21ZM12 23H20M13 27H19M13 30H19"/><path stroke-width="1" d="M8 8L20 20M12 4L23 15M24 8L12 20M20 4L9 15"/></g></svg></div>
<div class="ib"><svg class="ic"><path stroke="#909090" d="M12 21L7 14V8L12 3H20L25 8V14L20 21ZM12 24H20M13 27H19M13 30H19"/></svg></div>
<div class="ib"><svg class="ic"><path fill="#0f0" d="M6 8H26L17 19H15Z"/><path d="M4 7H28M16 18V30" stroke-width="3"/></svg></div>
<svg class="ic" style="margin-left:6px"><path fill="#ff0" d="M6 8H26L17 19H15Z"/><path d="M4 7H28M16 18V30" stroke-width="3"/></svg>
</div>
<div class="colhead d-flex"><div style="width:134px"><span class="t" data-w="41">Element</span></div><div style="width:34px"></div></div>
</section>

<section class="pane" style="width:276px;margin-left:4px">
<div class="phead d-flex align-items-center"><span class="t" data-w="58">Parts Picker</span><svg class="ms-auto" width="27" height="12" fill="none" style="margin-right:2px"><use href="#pin"/><use href="#xx" x="17"/></svg></div>
<div class="picker">
<div class="d-flex align-items-center" style="padding:10px 0 0 15px"><button class="pk" style="width:127px;font-size:22px"><span class="t" data-w="106">Download</span></button><i class="vv" style="margin-left:20px"></i></div>
<div class="d-flex align-items-center" style="padding:8px 0 0 15px"><button class="pk" style="width:100px;font-size:22px"><span class="t" data-w="79">Profiles</span></button><i class="vv" style="margin-left:20px"></i><button class="pk" style="width:98px;font-size:18px;margin-left:27px"><span class="t" data-w="70">Support</span></button></div>
<div class="pnav" style="padding-top:9px">
<div class="prow"><span class="lk text-white"><span class="t" data-w="65">New Parts</span></span><span class="lk cur"><span class="t" data-w="62">Couplings</span></span><span class="lk"><span class="t" data-w="46">Fittings</span></span></div>
<div class="prow"><span class="lk"><span class="t" data-w="82">Hanger Parts</span></span><span class="lk"><span class="t" data-w="62">Hardware</span></span></div>
<div class="prow"><span class="lk"><span class="t" data-w="48">Nozzles</span></span><span class="lk"><span class="t" data-w="27">Pipe</span></span><span class="lk"><span class="t" data-w="77">Pipe Outlets</span></span></div>
<div class="prow"><span class="lk"><span class="t" data-w="63">Sprinklers</span></span><span class="lk"><span class="t" data-w="83">Sway Bracing</span></span><span class="lk"><span class="t" data-w="29">Trim</span></span></div>
<div class="prow"><span class="lk"><span class="t" data-w="40">Valves</span></span><span class="lk"><span class="t" data-w="31">FDCs</span></span></div>
<div style="padding:10px 0 0 21px;height:55.500px"><span class="t" data-w="163">Flexible Sprinkler Hoses &amp;</span><br><span class="t" data-w="73">Accessories</span></div>
</div>
<div class="filt d-flex">
<div style="width:210px;padding:10px 0 0 10px">
<div class="d-flex text-white" style="font-weight:600;font-size:14px;width:190px"><span class="t" data-w="41" style="padding-top:1px">Filters</span><span class="pk ms-auto" style="width:45px;height:19px"><span class="t" data-w="38">Reset</span></span></div>
<div class="bg-white d-flex align-items-center" style="width:190px;height:31px;margin-top:15px;border-radius:3px;box-shadow:inset 0 0 4px #a9bfe8;color:#a9a9a9;font-size:14px;padding:2px 0 0 11px"><span class="t" data-w="95">Search by Text</span></div>
<div class="d-flex" style="margin-top:10px;width:200px;border-top:1px solid #2a3970;border-bottom:1px solid #2a3970;height:261px">
<div style="width:183px;padding-top:9px">
<div class="sec"><span class="t" data-w="43">REGION</span><span style="margin-top:-2px">+</span></div>
<div class="sec"><span class="t" data-w="41">ORIGIN</span><span style="margin-top:-2px">+</span></div>
<div class="sec" style="height:25px"><span class="t" data-w="92">MANUFACTURER</span><span style="margin-top:-1px">−</span></div>
<div id="makers"></div>
</div>
<div class="d-flex flex-column align-items-center" style="width:17px;background:#f0f0f0;padding-top:16px"><svg width="12" height="9" fill="none" stroke="#555" stroke-width="3"><path d="M1 8L6 3L11 8"/></svg><i style="width:15px;height:100px;background:#cdcdcd;margin-top:9px"></i><svg style="margin-top:99px" width="12" height="9" fill="none" stroke="#555" stroke-width="3"><path d="M1 1L6 6L11 1"/></svg></div>
</div>
<div class="crow" style="margin-top:9px;color:#46a3f5"><i class="ck"></i><span class="t" data-w="86" style="font-size:13.500px;margin-top:1px">Metric Display</span></div>
<div class="crow" style="color:#46a3f5"><i class="ck"></i><span class="t" data-w="71" style="font-size:13.500px;margin-top:1px">Use Staging</span></div>
</div>
<svg width="36" height="393" viewBox="1014 554 36 393" style="margin-top:10px"><rect x="1014.500" y="554.500" width="50" height="392" rx="4" fill="#1b2236" stroke="#26335c"/><rect x="1040" y="565" width="30" height="31" rx="2" fill="#fff"/><path d="M1025 670H1050V741H1025Z" fill="#232c4b"/><path d="M1025 742.500H1050" stroke="#34417a" stroke-width="2"/><path d="M1030 708H1050V733H1030Z" fill="#d9dccd"/><path d="M1034 712.500H1050V729H1034Z" fill="#38393b"/><path d="M1036.500 770.500H1048.500V782.500H1036.500ZM1036.500 836.500H1048.500V848.500H1036.500ZM1036.500 902.500H1048.500V914.500H1036.500Z" fill="#fff" stroke="#777"/></svg>
</div>
</div>
</section>

<section class="view">
<div class="vtabs d-flex align-items-center"><span class="t" data-w="52">Start Page</span><span class="t" data-w="49" style="margin-left:14px">Drawing1</span><div class="on" style="margin-left:9px"><span class="t" data-w="148">Simple Threaded System.cad</span><svg style="margin:1px 0 0 9px" width="9" height="9" fill="none" stroke="#333"><path d="M1 1L7 8M7 1L1 8"/></svg></div>
<svg class="ms-auto me-3" width="30" height="10" fill="none" stroke="#3c3c3c"><path d="M6 1V9L1 5ZM21 1V9L26 5Z"/></svg></div>
<div class="frame">
<div style="border:1px solid #777;border-right:0;border-bottom:0">
<div class="d-flex">
<svg width="767" height="715" viewBox="1081 210 767 715">
<rect x="1081" y="210" width="767" height="715" fill="#5a5a5a"/>
<path d="M1081 210H1473L1081 436Z" fill="#3c1717"/><path d="M1473 210H1527L1081 467V436Z" fill="#3d0505"/><path d="M1527 210H1560V221L1081 497V467Z" fill="#5b1717"/>
<path d="M1848 274.500V418L1081 862V716Z" fill="url(#gg)"/>
<path d="M1534.500 210H1617.600L1848 345V392Z" fill="url(#gr)"/>
<path d="M1700 210H1709V262H1700Z"/>
<path d="M1707 263Q1690 272 1687 292Q1686 303 1691 307" fill="none" stroke="#000" stroke-width="8"/><path d="M1706 262Q1722 259 1724 272M1689 304Q1695 312 1704 308" fill="none" stroke="#000" stroke-width="4"/>
<path d="M1446 485V500Q1447 508 1451 512V523Q1471 536 1492 520V512Q1496 507 1496 500V485Q1495 480 1492 478H1451Q1447 480 1446 485Z" fill="url(#gc)"/>
<path d="M1447 487Q1453 500 1471 499Q1490 499 1495 487" fill="none" stroke="#0c0c0c" stroke-width="4"/>
<path d="M1451 210H1492V488Q1488 497 1471 498Q1455 497 1451 488Z" fill="url(#gy)"/>
<path d="M1509 469Q1523 479 1516 494Q1507 510 1483 512.500Q1461 515 1444 508" fill="none" stroke="#77772a" stroke-width="1.600"/>
<path d="M1464 559L1430 539L1435 534L1395 526.500L1408 551L1414.600 547L1457 571" fill="none" stroke="#2a7a2a" stroke-width="1.200"/>
<path d="M1464 559L1499 539L1493 534L1535 526.500L1521 551L1514 547L1471.500 571" fill="none" stroke="#7a2626" stroke-width="1.200"/>
<path d="M1457 570V523L1450 526L1464.500 486L1478 511L1471.500 513V570Q1464 580 1457 570" fill="none" stroke="#2b2b8c" stroke-width="1.200"/>
<ellipse cx="1464" cy="567" rx="9.500" ry="6" fill="#444" stroke="#000"/><path d="M1464 567L1456 562V572ZM1464 567L1472 562V572ZM1459 562H1469L1464 566Z"/>
<path d="M1848 563Q1818 745 1801 925H1818Q1827 790 1848 666Z" fill="url(#gb)"/>
</svg>
<div class="d-flex align-items-center justify-content-center" style="width:17px;background:#f0f0f0"><i style="width:2px;height:17px;background:#868686;margin-top:-110px"></i></div>
</div>
<div class="strip justify-content-center" style="height:18px"><i style="width:17px;margin-left:-45px"></i></div>
<div class="d-flex align-items-center" style="height:17px;background:linear-gradient(#555,#7b7b7b 40%,#707070);border-top:1px solid #444;gap:2px">
<div class="nb"><svg width="8" height="8"><path d="M0 0H1V8H0ZM7 0V8L2 4Z" fill="#555"/></svg></div><div class="nb"><svg width="8" height="8"><path d="M6 0V8L1 4Z" fill="#555"/></svg></div><div class="nb"><svg width="8" height="8"><path d="M2 0V8L7 4Z" fill="#555"/></svg></div><div class="nb"><svg width="8" height="8"><path d="M6 0H7V8H6ZM0 0V8L5 4Z" fill="#555"/></svg></div>
<div class="d-flex align-items-center" style="height:17px;width:53px;margin-left:5px;background:#f4f6f8;clip-path:polygon(0 0,100% 0,82% 100%,0 100%);padding-left:6px;font-weight:700"><span class="t" data-w="39">*Model</span></div>
<div class="d-flex align-items-center" style="height:17px;width:60px;margin-left:-8px;background:#c9d0d8;clip-path:polygon(12% 0,100% 0,76% 100%,0 100%);padding-left:10px"><span class="t" data-w="37">Sheet 1</span></div>
</div>
</div>
</div>
</section>

<aside class="side ms-0">
<div class="vb" style="height:213px"><i class="vgrip"></i>
<span class="vt" style="height:69px;margin-top:8px"><span id="impDwg" class="vt">Import DWG</span></span>
<div class="vi"><svg class="ic" viewBox="0 0 32 32"><path class="n" fill="#2b527e" d="M4 2H24L30 9V30H4Z"/><path class="n" fill="#fff" d="M24 2V9H30Z"/><path stroke="#fff" d="M4 13H22M11 4V28"/><path stroke="#e00" stroke-width="3" d="M8 8L22 4"/></svg></div>
<div class="vi"><svg class="ic sh"><path fill="#fff" d="M1 5H10V28H1ZM12 3H22L29 9V26H12Z"/><path stroke="#f0f" d="M5 17H24M9 13V21"/></svg></div>
<div class="vi"><svg class="ic"><path fill="#2b527e" d="M6 5H15V13H6ZM12 10H21V18H12ZM18 15H27V23H18Z"/></svg></div></div>
<div class="vmore" style="height:20px"><svg width="16" height="12"><path d="M2 1V10" stroke="#eee" stroke-width="2"/><path d="M7 1V10L13 6Z" fill="#555" stroke="#fff"/></svg></div>
<div class="vb" style="height:363px"><i class="vgrip"></i>
<div class="vi" style="margin-top:3px"><svg class="ic"><path stroke="#c00" stroke-width="3" d="M0 17L26 4"/><path stroke="#0b0" stroke-width="3" d="M16 10L27 15V24"/><path stroke="#00e" stroke-width="2" d="M24 25L31 31M31 25L24 31M24 28H32"/></svg></div>
<div class="vi"><svg class="ic"><path stroke="#c00" stroke-width="3" d="M0 13H32"/><path stroke="#d0d" stroke-width="3" d="M10 14V24"/><circle cx="10" cy="25" r="3" fill="#fff"/><use href="#spk" x="15" y="9"/><path stroke-width="3" d="M21 15L32 23"/></svg></div>
<i class="vsep" style="margin-top:3px"></i>
<div class="vi mt-1"><svg class="ic"><path stroke="#c00" stroke-width="3" d="M0 15H27V4V26"/><path class="n" fill="#00e" d="M24 1H32V9H24ZM24 22H32V30H24Z"/></svg></div>
<div class="vi"><svg class="ic"><path stroke="#d00" stroke-width="3" d="M0 23L16 6L32 23"/><path stroke-width="4" d="M12 10L16 6L20 10"/></svg></div>
<div class="vi"><svg class="ic"><path stroke="#c00" stroke-width="4" d="M14 5L32 12M0 4L14 9"/><path stroke="#0c0" stroke-width="4" d="M12 9V26"/><path d="M14 26V10L20 22L30 29M30 12L16 26M4 28H12M24 22L32 24"/></svg></div>
<i class="vsep" style="margin-top:2px"></i>
<div class="vi" style="margin-top:3px"><svg class="ic"><path stroke="#c00" stroke-width="4" d="M0 12H5V27H12M26 8H20V22"/><circle cx="12" cy="26" r="3" fill="#fff"/><circle cx="27" cy="6" r="3" fill="#fff"/><use href="#star" x="9" y="8"/><path stroke-width="4" d="M15 13L31 29"/></svg></div>
<div class="vi"><svg class="ic sh"><path class="n" fill="#d00" d="M0 10H10V13H21V15H32V18H21V20H10V22H0Z"/></svg></div>
<div class="vi"><svg class="ic sh"><path stroke="#d00" stroke-width="3" d="M0 10H10V22H22V10H32"/><g fill="#fff"><circle cx="10" cy="10" r="3"/><circle cx="22" cy="10" r="3"/><circle cx="10" cy="22" r="3"/><circle cx="22" cy="22" r="3"/></g></svg></div></div>
<div class="vmore" style="height:22px"><svg width="16" height="12"><path d="M2 1V10" stroke="#eee" stroke-width="2"/><path d="M7 1V10L13 6Z" fill="#555" stroke="#fff"/></svg></div>
<div class="vb" style="height:113px"><i class="vgrip"></i><span class="vt" style="height:36px;margin-top:7px">GLSL</span><div class="hot" style="width:43px;height:62px"><span class="vt" style="font-size:11.500px">OpenGL®</span></div></div>
<div class="vmore" style="height:22px"><svg width="16" height="12"><path d="M2 1V10" stroke="#eee" stroke-width="2"/><path d="M7 1V10L13 6Z" fill="#555" stroke="#fff"/></svg></div>
</aside>
</main>

<div class="statusbar d-flex align-items-center"><span class="t" data-w="259" style="padding-top:3px">Decreases the camera magnification of the camera.</span>
<div class="d-flex ms-auto" style="width:305px;margin-top:3px"><div class="sc" style="width:51px"><span class="t" data-w="44">0'-5, 0'-0</span></div><div class="sc" style="width:5px"></div><div class="sc" style="width:57px"><span class="t" data-w="51">Elev1: 2'-3</span></div><div class="sc" style="width:25px"><span class="t" data-w="19">6'-0</span></div><div class="sc" style="width:56px"><span class="t" data-w="49">Flex Drop</span></div><div class="sc" style="width:32px"><span class="t" data-w="26">#&nbsp;Off</span></div><div class="sc"><span class="t" data-w="23">Foot</span></div></div></div>

<!-- pane, keypad and camera toolbars -->
<footer class="bars d-flex">
<div class="tb d-flex align-items-center" style="width:618px"><i class="grip"></i>
<div class="ib"><svg class="ic"><path fill="#ccc" d="M1 6V27H7V6"/><path fill="#fff" d="M8 6H27V24H8Z"/><path class="n" fill="#00007e" d="M0 1H28V7H0Z"/><path class="n" fill="#fff" d="M2 3H4V5H2Z"/><path fill="#ff9" stroke="#999" d="M13 20L16 14H20L22 18H31V28H13Z"/><path d="M14 31H32V20"/></svg></div>
<div class="hot" style="width:39px"><span class="t" data-w="30">Layers</span></div><div class="hot" style="width:67px;margin-left:1px"><span class="t" data-w="58">Parts Picker</span></div><div class="hot" style="width:37px"><span class="t" data-w="29">Alerts</span></div><div class="hot" style="width:39px;margin-left:1px"><span class="t" data-w="30">Select</span></div><div class="hot" style="width:51px"><span class="t" data-w="42">Symbols</span></div>
<div class="ib"><svg class="ic sh" viewBox="-3 -3 38 38"><use href="#arr" fill="#00f"/></svg></div>
<div class="ib"><svg class="ic sh" viewBox="-3 -3 38 38"><use href="#arr" fill="#00f" transform="rotate(90 16 16)"/></svg></div>
<div class="ib"><svg class="ic sh" viewBox="-3 -3 38 38"><use href="#arr" fill="#00f" transform="rotate(180 16 16)"/></svg></div>
<div class="ib"><svg class="ic sh" viewBox="-3 -3 38 38"><use href="#arr" fill="#00f" transform="rotate(-90 16 16)"/></svg></div>
<div class="ib"><svg class="ic sh"><use href="#undo" fill="#00f"/></svg></div>
<div class="ib"><svg class="ic sh"><use href="#undo" fill="#00f" transform="matrix(-1 0 0 1 32 0)"/></svg></div>
<div class="ib"><svg class="ic"><path fill="#cdd" stroke="#00f" d="M12 12H20V20H12Z"/><path d="M16 1V8M13 5L16 8L19 5M16 31V24M13 27L16 24L19 27M1 16H8M5 13L8 16L5 19M31 16H24M27 13L24 16L27 19M2 2L7 7M7 3V7H3M30 2L25 7M25 3V7H29M2 30L7 25M3 25H7V29M30 30L25 25M25 29V25H29"/></svg></div>
<div class="more"><svg width="16" height="14"><use href="#mo"/></svg></div></div>
<div class="tb d-flex align-items-center" style="width:185px"><i class="grip"></i>
<div class="ib" style="width:42px"><svg class="ic"><path d="M4 8H12M8 4V12M20 8H29M4 19L11 27M11 19L4 27M20 23H29M24 18V20M24 26V28"/></svg></div>
<div class="ib" style="width:41px"><svg class="ic"><path class="n" fill="#000" d="M7 10H16V5L25 15L16 25V20H7Z"/></svg></div>
<i style="width:60px;height:15px;background:#fff;margin-left:8px"></i>
<div class="more"><svg width="16" height="14"><use href="#mo"/></svg></div></div>
<div class="tb d-flex align-items-center" style="width:1091px"><i class="grip"></i>
<div class="ib"><svg class="ic"><path d="M2 23L16 8H28M3 16L10 22" stroke-width="1.500"/></svg></div>
<div class="ib"><svg class="ic"><path fill="#fff" d="M1 1H31V30H1ZM6 1V30M26 1V30M1 6H31M1 26H31"/><path class="n" fill="#0dd" d="M7 2H25V5H7Z"/><circle cx="16" cy="16" r="6"/><path class="n" fill="#000" d="M16 16V10L10 16ZM16 16H22L16 22Z"/></svg></div>
<div class="ib"><svg class="ic"><path d="M8 10L14 6Q26 4 26 12L23 18"/><path class="n" fill="#000" d="M3 7V19H14ZM1 22H7V29H1ZM22 22H28V29H22Z"/><path stroke="#00f" d="M7 26H22"/></svg></div>
<div class="ib"><svg class="ic"><path class="n" fill="#00f" d="M2 3H8V9H2ZM12 3H18V9H12ZM22 3H28V9H22ZM16 13H22V19H16Z"/><path fill="#fff" stroke-width="1.500" d="M22 17V29L25 27L27 31L29 29L27 26H31Z"/></svg></div>
<span class="t" data-w="77">Lock On Target</span><i class="gp"></i>
<div class="ib"><svg class="ic sh"><circle cx="15" cy="11" r="9" fill="#eee"/><path fill="#fff" d="M2 17L11 6L20 17H16V27H6V17Z"/><path stroke-width="4" d="M22 20L29 28"/></svg></div>
<div class="hot hoty" style="width:44px"><svg class="ic sh"><circle cx="15" cy="10" r="9" fill="#eee"/><path fill="#fff" d="M2 17H7V10H17V17H21L12 28Z"/><path stroke-width="4" d="M23 20L30 28"/></svg></div>
<div class="ib"><svg class="ic sh" viewBox="-3 -3 38 38"><use href="#arr" fill="#800080" transform="rotate(90 16 16)"/><path stroke="#f0f" d="M3 14L16 1"/></svg></div>
<div class="ib"><svg class="ic sh" viewBox="-3 -3 38 38"><use href="#arr" fill="#800080"/><path stroke="#f0f" d="M2 15L13 4M14 11H28"/></svg></div>
<div class="ib"><svg class="ic sh"><use href="#undo" fill="#800080"/><path stroke="#f0f" d="M4 18V4M10 9Q17 4 24 9"/></svg></div>
<div class="ib"><svg class="ic sh" viewBox="-3 -3 38 38"><use href="#arr" fill="#800080" transform="rotate(-90 16 16)"/><path stroke="#f0f" d="M11 3V19H4"/></svg></div>
<div class="ib"><svg class="ic sh" viewBox="-3 -3 38 38"><use href="#arr" fill="#800080" transform="rotate(180 16 16)"/><path stroke="#f0f" d="M3 22V11H19V4"/></svg></div>
<div class="ib"><svg class="ic sh"><use href="#undo" fill="#800080" transform="matrix(-1 0 0 1 32 0)"/><path stroke="#f0f" d="M11 29L6 22V12L14 6H22"/></svg></div>
<div class="ib"><svg class="ic sh"><path stroke="#d00" stroke-width="4" d="M16 3V30"/><path stroke="#fff" stroke-width="4" d="M16 5V30" stroke-dasharray="3 4"/><path stroke-width="3" d="M29 8H20M13 9L4 13V18L12 22H22M18 14L28 20L20 27"/><circle cx="16" cy="2" r="2"/></svg></div>
<div class="ib"><svg class="ic sh"><path stroke="#d00" stroke-width="4" d="M16 3V30"/><path stroke="#fff" stroke-width="4" d="M16 5V30" stroke-dasharray="3 4"/><path stroke-width="3" d="M3 8H12M19 9L28 13V18L20 22H10M14 14L4 20L12 27"/><circle cx="16" cy="2" r="2"/></svg></div>
<div class="ib"><svg class="ic sh"><use href="#house2"/><path stroke="#800000" stroke-width="3" d="M25 27H32"/></svg></div>
<div class="ib"><svg class="ic sh"><use href="#house"/><path class="n" fill="#800000" d="M8 17H14V29H8Z"/><path fill="#fff" stroke="#00007e" d="M18 17H25V22H18Z"/></svg></div>
<div class="ib"><svg class="ic sh"><use href="#house2"/><path stroke="#800000" stroke-width="3" d="M0 27H7"/></svg></div>
<div class="ib"><svg class="ic sh"><use href="#house"/><path fill="#fff" stroke="#00007e" d="M8 17H14V22H8ZM18 17H24V22H18Z"/></svg></div>
<div class="ib"><svg class="ic"><path fill="#fff" stroke-width="1.600" d="M3 3H12L9 6L14 11L11 14L6 9L3 12ZM29 3H20L23 6L18 11L21 14L26 9L29 12ZM3 29H12L9 26L14 21L11 18L6 23L3 20ZM29 29H20L23 26L18 21L21 18L26 23L29 20Z"/></svg></div>
<div class="hot" style="width:43px"><svg class="ic sh"><path fill="#fff" stroke="#00007e" stroke-width="1.500" d="M1 15L19 4L29 9L19 13L12 11L8 14L30 24L26 28Z"/></svg></div>
<div class="ib"><svg class="ic sh"><path fill="#fff" stroke="#00007e" d="M3 5H29V27H3ZM3 13H8M12 5V13M12 16V18M21 5V18M21 22V24"/></svg></div>
<span class="t" data-w="39">Refresh</span>
<div class="more"><svg width="16" height="14"><use href="#mo"/></svg></div></div>
</footer>

<script>
const layers=[["0",34,"tip top0",0,22],["SPRINKLER S...",0,"",1,76],["SPRINKLERS",3,"kid",0,64],["PIPES",18,"kid",0,29],["HYDRAULI...",0,"kid",0,64],["AREAS",0,"kid",0,35],["FITTINGS",27,"kid",0,47],["SUPPLY",1,"kid",0,40],["DETAILS",0,"kid",0,42],["HANGERS",3,"kid",0,53],["BACKGROUND",0,"",2,77],["BENCHMARK",1,"tip",0,72],["SPRINKLER S...",0,"end0",2,76]];
document.getElementById('layerRows').innerHTML=layers.map(r=>`<div class="lrow ${r[0]=='FITTINGS'?'seld':''}"><span class="nm ${r[2]}">${r[3]?`<i class="box9 ${r[3]==2?'pl':''}"></i>`:''}<span class="t" ${r[0]=='0'?'':`data-w="${r[4]}"`}>${r[0]}</span></span><svg width="16" height="13" fill="none" style="margin-left:1px"><use href="#eye"/></svg><svg width="15" height="16" fill="none" style="margin-left:2px"><use href="#mag"/></svg><span></span><i class="sw" ${r[0]=='SUPPLY'?'style="background:#00f"':''}></i><span style="padding-left:4px">${r[1]}</span></div>`).join('');
document.getElementById('symRows').innerHTML=[["Default Sym...",0,2,73],["Long-Eared ...",0,6,73]].map(r=>`<div class="d-flex align-items-center" style="height:17px;padding-left:2px"><svg width="16" height="16" class="ic" style="width:16px;height:16px"><rect class="n" width="15" height="15" fill="#0e0"/><path class="n" fill="#fff" d="M3 3H6V6H3ZM9 1H14V6H9ZM3 9H5V13H3ZM7 9H9V13H7ZM11 8H14V13H11Z"/><path stroke="#070" d="M15 2V15H2" stroke-width="1"/></svg><span class="t" data-w="${r[3]}" style="margin-left:2px">${r[0]}</span><span style="width:50px;margin-left:13px">${r[1]}</span><span>${r[2]}</span></div>`).join('');
document.getElementById('makers').innerHTML=[["All","",13],["Anvil",26,27],["Argco",6,32],["Generic",11,44],["Reliable",10,44],["Shurjoint",12,51]].map(r=>`<div class="crow"><i class="ck">${r[1]===""?'<svg width="11" height="11" fill="none" stroke="#000" stroke-width="2"><path d="M2 5L4.500 8L9 2"/></svg>':''}</i><span class="t" data-w="${r[2]}">${r[0]}</span>${r[1]?`<span class="pill">${r[1]}</span>`:''}</div>`).join('');
/* fit each label to its nominal width */
document.querySelectorAll('.t[data-w]').forEach(e=>{const w=+e.dataset.w,n=e.offsetWidth;if(!n)return;e.style.transform=`scaleX(${w/n})`;e.style.marginRight=(w-n)+'px'});
</script>
</body>
</html>
